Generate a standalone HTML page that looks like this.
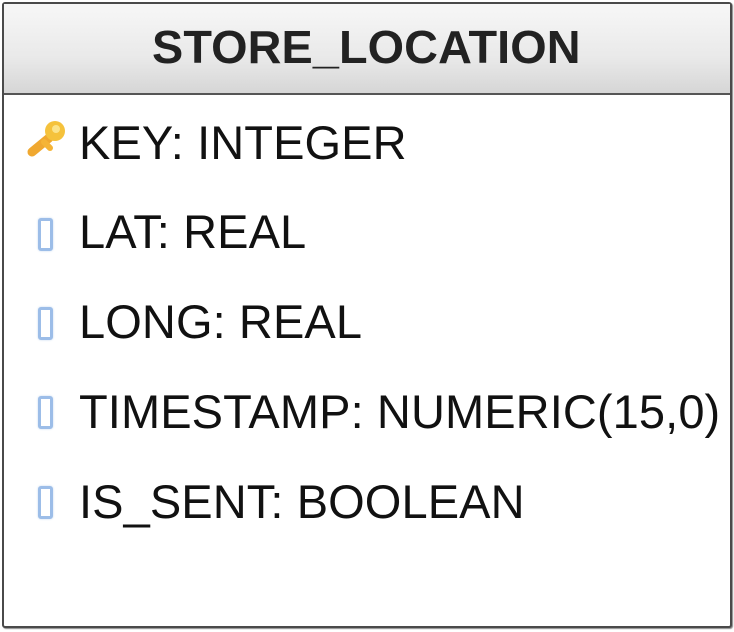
<!DOCTYPE html>
<html><head><style>
html,body{margin:0;padding:0;width:734px;height:632px;background:#fff;overflow:hidden}
.box{position:absolute;left:2px;top:2px;width:726px;height:622px;border:2px solid #4a4a4a;border-radius:3px;background:#fff;box-shadow:1px 1px 1px #888}
.hd{position:absolute;left:0;top:0;width:726px;height:89px;border-bottom:2px solid #555;background:linear-gradient(#f7f7f7,#e9e9e9 60%,#d6d6d6)}
.t{position:absolute;font-family:"Liberation Sans",Arial,sans-serif;font-size:47px;color:#111;white-space:nowrap;line-height:1;letter-spacing:0.1px}
.ti{font-weight:bold;color:#222;left:152px;top:24px;font-size:46.8px}
.ic{position:absolute;left:38px;width:9px;height:27px;border:3px solid #9cbde8;border-radius:3px;background:#fff;box-shadow:0 0 2px #c6d8f0}
</style></head><body>
<div class="box"><div class="hd"></div></div>
<div class="t ti">STORE_LOCATION</div>
<svg style="position:absolute;left:25px;top:116px" width="44" height="44" viewBox="0 0 44 44">
<path d="M7 36 L24 22" stroke="#f0a830" stroke-width="9" stroke-linecap="round"/>
<circle cx="30" cy="15" r="10" fill="#f5c23c"/>
<path d="M19 26 L25 32" stroke="#f5b436" stroke-width="6" stroke-linecap="round"/>
<circle cx="31" cy="13" r="4" fill="#fbe38a"/>
</svg>
<div class="t" style="left:79px;top:119px">KEY: INTEGER</div>
<div class="ic" style="top:218px"></div>
<div class="t" style="left:79px;top:208px">LAT: REAL</div>
<div class="ic" style="top:307px"></div>
<div class="t" style="left:79px;top:298px">LONG: REAL</div>
<div class="ic" style="top:396px"></div>
<div class="t" style="left:79px;top:388px">TIMESTAMP: NUMERIC(15,0)</div>
<div class="ic" style="top:486px"></div>
<div class="t" style="left:79px;top:478px">IS_SENT: BOOLEAN</div>
</body></html>
